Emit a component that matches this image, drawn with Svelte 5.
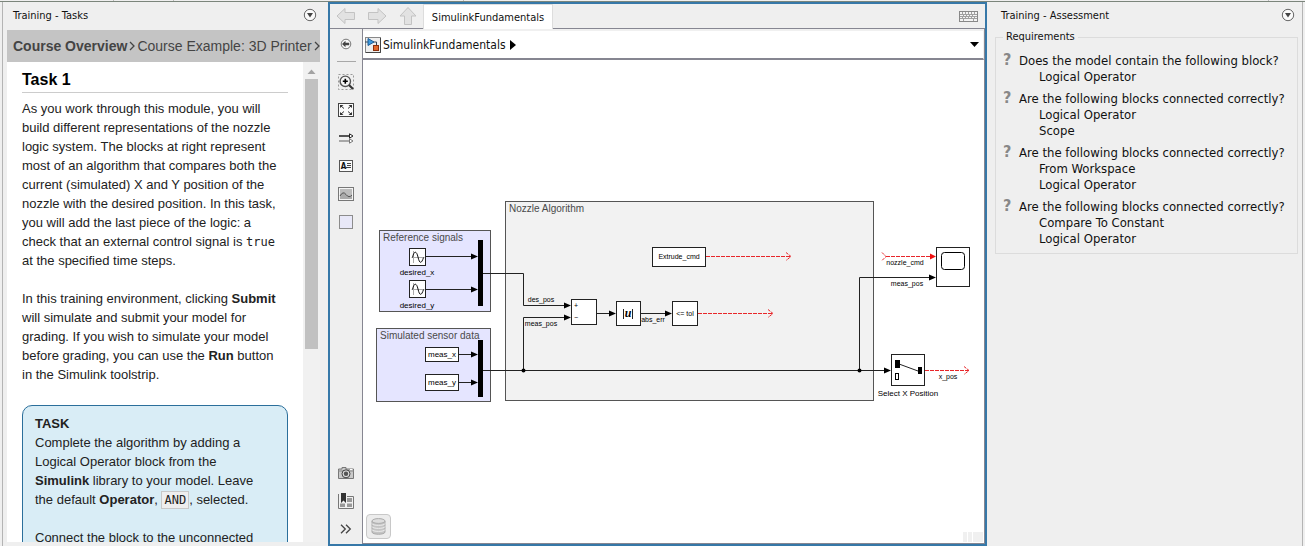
<script lang="ts">
	type Requirement = { question: string; blocks: string[] };

	const requirements: Requirement[] = [
		{ question: 'Does the model contain the following block?', blocks: ['Logical Operator'] },
		{
			question: 'Are the following blocks connected correctly?',
			blocks: ['Logical Operator', 'Scope']
		},
		{
			question: 'Are the following blocks connected correctly?',
			blocks: ['From Workspace', 'Logical Operator']
		},
		{
			question: 'Are the following blocks connected correctly?',
			blocks: ['Compare To Constant', 'Logical Operator']
		}
	];

	// model coordinates of the top left corner of the canvas
	const origin = { x: 363, y: 60 };

	const areas = [
		{ name: 'Nozzle Algorithm', x: 505, y: 201, w: 368, h: 199, fill: '#f2f2f2' },
		{ name: 'Reference signals', x: 379, y: 230, w: 111, h: 81, fill: '#e5e5ff' },
		{ name: 'Simulated sensor data', x: 376, y: 328, w: 114, h: 73, fill: '#e5e5ff' }
	];

	const blocks = [
		{ x: 409, y: 248, w: 16, h: 17 },
		{ x: 409, y: 280, w: 16, h: 17 },
		{ x: 425, y: 347, w: 33, h: 14 },
		{ x: 425, y: 374, w: 33, h: 16 },
		{ x: 571, y: 299, w: 25, h: 25 },
		{ x: 616, y: 301, w: 24, h: 24 },
		{ x: 672, y: 301, w: 25, h: 24 },
		{ x: 652, y: 247, w: 53, h: 19 },
		{ x: 936, y: 247, w: 33, h: 39 },
		{ x: 891, y: 354, w: 33, h: 31 }
	];

	const wires = [
		'M426 256.5H472',
		'M426 289.5H472',
		'M459 354.5H472',
		'M459 382.5H472',
		'M483 273.5H523.5V305.5H565',
		'M483 370.5H886',
		'M523.5 370.5V317.5H565',
		'M597 313.5H610',
		'M641 313.5H667',
		'M859.5 370.5V277.5H930'
	];

	const arrows = [
		[478, 256.5],
		[478, 289.5],
		[478, 354.5],
		[478, 382.5],
		[571, 305.5],
		[571, 317.5],
		[616, 313.5],
		[672, 313.5],
		[936, 277.5],
		[891, 370.5]
	];

	const openWires = [
		{ from: 706, to: 791, y: 256.5 },
		{ from: 698, to: 773, y: 313.5 },
		{ from: 925, to: 969, y: 370.5 }
	];

	const labels = [
		{ text: 'desired_x', x: 417, y: 275, size: 8 },
		{ text: 'desired_y', x: 417, y: 308, size: 8 },
		{ text: 'meas_x', x: 442, y: 357, size: 8 },
		{ text: 'meas_y', x: 442, y: 385, size: 8 },
		{ text: 'des_pos', x: 541, y: 302, size: 7 },
		{ text: 'meas_pos', x: 541, y: 326, size: 7 },
		{ text: 'abs_err', x: 653, y: 322, size: 7 },
		{ text: '<= tol', x: 685, y: 316, size: 7 },
		{ text: 'Extrude_cmd', x: 679, y: 259, size: 7 },
		{ text: 'nozzle_cmd', x: 905, y: 265, size: 7 },
		{ text: 'meas_pos', x: 907, y: 286, size: 7 },
		{ text: 'x_pos', x: 948, y: 379, size: 7 },
		{ text: 'Select X Position', x: 908, y: 396, size: 8 }
	];
</script>

{#snippet collapse()}
	<button class="collapse" aria-label="Panel actions">
		<svg width="14" height="14" viewBox="0 0 14 14">
			<circle cx="7" cy="7" r="5.7" fill="#fafafa" stroke="#666" />
			<path d="M4 5H10L7 9.5Z" fill="#444" />
		</svg>
	</button>
{/snippet}

<div class="app">
	<div class="ribbon">
		<i></i><i></i><i></i><i></i>
	</div>

	<section class="dock tasks">
		<header class="dock-title">
			<h1>Training - Tasks</h1>
			{@render collapse()}
		</header>
		<nav class="crumbs">
			<a class="current" href="#overview">Course Overview</a>
			<svg width="6" height="10" viewBox="0 0 6 10"><path d="M1 1L5 5L1 9" /></svg>
			<a href="#example">Course Example: 3D Printer</a>
			<svg width="6" height="10" viewBox="0 0 6 10"><path d="M1 1L5 5L1 9" /></svg>
		</nav>
		<div class="lesson">
			<article>
				<h2>Task 1</h2>
				<p>
					As you work through this module, you will build different representations of the nozzle
					logic system. The blocks at right represent most of an algorithm that compares both the
					current (simulated) X and Y position of the nozzle with the desired position. In this task,
					you will add the last piece of the logic: a check that an external control signal is
					<code>true</code> at the specified time steps.
				</p>
				<p>
					In this training environment, clicking <b>Submit</b> will simulate and submit your model for
					grading. If you wish to simulate your model before grading, you can use the <b>Run</b> button<br />
					in the Simulink toolstrip.
				</p>
				<div class="task-box">
					<b>TASK</b>
					<p>
						Complete the algorithm by adding a Logical Operator block from the<br />
						<b>Simulink</b> library to your model. Leave<br />
						the default <b>Operator</b>, <code class="value">AND</code>, selected.
					</p>
					<p>Connect the block to the unconnected</p>
				</div>
			</article>
			<div class="scrollbar">
				<svg width="9" height="5" viewBox="0 0 9 5"><path d="M0.5 5L4.5 0.5L8.5 5Z" fill="#a3a3a3" /></svg>
				<div class="thumb"></div>
			</div>
		</div>
	</section>

	<main class="editor">
		<div class="tabs">
			<button class="nav" aria-label="Back">
				<svg width="20" height="18" viewBox="0 0 20 18"><path d="M1 9L9 1.5V5.5H18.5V12.5H9V16.5Z" /></svg>
			</button>
			<button class="nav" aria-label="Forward">
				<svg width="20" height="18" viewBox="0 0 20 18"><path d="M19 9L11 1.5V5.5H1.5V12.5H11V16.5Z" /></svg>
			</button>
			<button class="nav up" aria-label="Up">
				<svg width="18" height="18" viewBox="0 0 18 18"><path d="M9 0.5L17 9H12.5V17.5H5.5V9H1Z" /></svg>
			</button>
			<button class="tab">SimulinkFundamentals</button>
			<button class="keyboard" aria-label="Keyboard shortcuts">
				<svg width="19" height="11" viewBox="0 0 19 11">
					<rect x="0.5" y="0.5" width="18" height="10" fill="#f4f4f4" stroke="#888" />
					<path
						d="M1 3.5H18M1 5.5H18M1 7.5H18M3.5 1V3M6.5 1V3M9.5 1V3M12.5 1V3M15.5 1V3M4.5 4V5M7.5 4V5M10.5 4V5M13.5 4V5M3.5 6V7M6.5 6V7M9.5 6V7M12.5 6V7M15.5 6V7M4.5 8V10M14.5 8V10"
						stroke="#a0a0a0"
					/>
				</svg>
			</button>
		</div>

		<div class="palette">
			<button aria-label="Hide browser">
				<svg width="12" height="12" viewBox="0 0 12 12">
					<circle cx="6" cy="6" r="4.8" fill="#f7f7f7" stroke="#777" />
					<path d="M2 6L5.5 2.8V4.8H9.2V7.2H5.5V9.2Z" fill="#444" />
				</svg>
			</button>
			<hr />
			<button aria-label="Zoom">
				<svg width="16" height="16" viewBox="0 0 16 16" fill="none">
					<rect x="0.5" y="0.5" width="15" height="15" stroke="#999" stroke-dasharray="2 2" />
					<circle cx="7.3" cy="7.3" r="5.2" fill="#f6f6f6" stroke="#555" stroke-width="1.4" />
					<path d="M11 11L15 15" stroke="#333" stroke-width="2.2" />
					<path d="M4.8 7.3H9.8M7.3 4.8V9.8" stroke="#000" stroke-width="1.6" />
				</svg>
			</button>
			<button aria-label="Fit to view">
				<svg width="16" height="14" viewBox="0 0 16 14">
					<rect x="0.5" y="0.5" width="15" height="13" fill="#fafafa" stroke="#444" />
					<path d="M2 2H5.5L2 5ZM14 2H10.5L14 5ZM2 12H5.5L2 9ZM14 12H10.5L14 9Z" fill="#333" />
					<path d="M3 3L6 5.5M13 3L10 5.5M3 11L6 8.5M13 11L10 8.5" stroke="#333" />
				</svg>
			</button>
			<button aria-label="Signal lines">
				<svg width="15" height="11" viewBox="0 0 15 11" fill="none">
					<path d="M0 3H11" stroke="#000" stroke-width="1.3" />
					<path d="M0 8H11" stroke="#777" stroke-width="1.2" />
					<path d="M10.5 0.8L14 3L10.5 5.2Z" fill="#fff" stroke="#222" />
					<path d="M10.5 5.8L14 8L10.5 10.2Z" fill="#fff" stroke="#777" />
				</svg>
			</button>
			<button class="annotation" aria-label="Annotation">
				<b>A</b>
				<svg width="5" height="6" viewBox="0 0 5 6"><path d="M1 0.5H5M1 2.5H5M0 4.5H5" stroke="#444" /></svg>
			</button>
			<button aria-label="Image">
				<svg width="16" height="14" viewBox="0 0 16 14">
					<rect x="0.5" y="0.5" width="15" height="13" fill="#f4f4f4" stroke="#777" />
					<rect x="2" y="2" width="12" height="10" fill="#bcbcbc" />
					<path d="M2 9Q5 3.5 8 7.5T14 8V12H2Z" fill="#aaa" />
					<path d="M2 9Q5 3.5 8 7.5T14 8" fill="none" stroke="#555" />
				</svg>
			</button>
			<button aria-label="Area">
				<svg width="14" height="14" viewBox="0 0 14 14">
					<rect x="0.5" y="0.5" width="13" height="13" fill="#e8e8f8" stroke="#8c8c8c" />
				</svg>
			</button>
			<button class="camera" aria-label="Screenshot">
				<svg width="16" height="12" viewBox="0 0 16 12">
					<path d="M1 2H4V0.5H8V2H15.5V11.5H0.5V2Z" fill="#c9c9c9" stroke="#777" />
					<path d="M0 4H16" stroke="#888" />
					<circle cx="8" cy="6.8" r="4" fill="#ddd" stroke="#444" />
					<circle cx="8" cy="6.8" r="2.2" fill="#555" />
					<path d="M12 2.5H14.5" stroke="#fff" />
				</svg>
			</button>
			<button aria-label="Bookmarks">
				<svg width="16" height="16" viewBox="0 0 16 16">
					<path d="M0.5 1V15.5H15.5V3.5H9" fill="#f1f1f1" stroke="#777" />
					<path d="M9 5H14V9H9ZM2 10.5H7V14H2ZM9 10.5H14V14H9Z" fill="#999" />
					<path d="M3 0H8V10L5.5 7.5L3 10Z" fill="#333" />
				</svg>
			</button>
			<button aria-label="More">
				<svg width="12" height="10" viewBox="0 0 12 10">
					<path d="M1 0.7L5.3 5L1 9.3M6 0.7L10.3 5L6 9.3" fill="none" stroke="#444" stroke-width="1.3" />
				</svg>
			</button>
		</div>

		<div class="workspace">
			<div class="address">
				<svg width="16" height="16" viewBox="0 0 16 16">
					<rect x="0.5" y="0.5" width="15" height="15" fill="#eee" stroke="#888" />
					<path d="M1 15.5H15.5V1" fill="none" stroke="#444" />
					<path d="M0 5H3M8 5H11.5V9" fill="none" stroke="#345" />
					<path d="M3 1.5L9 5L3 8.5Z" fill="#3d9be0" stroke="#1d5c96" />
					<rect x="8.5" y="8.5" width="5" height="5" fill="#e2682c" stroke="#8a2f0c" />
				</svg>
				<a href="#model">SimulinkFundamentals</a>
				<svg class="next" width="6" height="10" viewBox="0 0 6 10"><path d="M0 0L6 5L0 10Z" /></svg>
				<button class="history" aria-label="Address history">
					<svg width="9" height="5" viewBox="0 0 9 5"><path d="M0 0H9L4.5 5Z" /></svg>
				</button>
			</div>

			<div class="canvas">
				<svg class="model" width="100%" height="100%">
					<g transform="translate({-origin.x} {-origin.y})">
						{#each areas as area}
							<rect
								x={area.x + 0.5}
								y={area.y + 0.5}
								width={area.w}
								height={area.h}
								fill={area.fill}
								stroke="#555"
							/>
							<text class="area-name" x={area.x + 4} y={area.y + 11}>{area.name}</text>
						{/each}

						<g fill="none" stroke="#222">
							{#each wires as wire}
								<path d={wire} />
							{/each}
						</g>
						{#each arrows as [x, y]}
							<path d="M{x} {y}l-7 -3v6z" />
						{/each}
						<circle cx="523.5" cy="370.5" r="2" />
						<circle cx="859.5" cy="370.5" r="2" />

						<!-- unconnected signals -->
						<g fill="none" stroke="#e8262a">
							{#each openWires as wire}
								<path d="M{wire.from} {wire.y}H{wire.to}" stroke-dasharray="4 1" />
								<path d="M{wire.to - 5} {wire.y - 4}l5 4l-5 4" stroke-dasharray="3 1" />
							{/each}
							<path d="M886 256.5H930" stroke-dasharray="4 1" />
							<path d="M882 252.5l4 4l-4 4" stroke-dasharray="3 1" />
						</g>
						<path d="M936 256.5l-6 -3v6z" fill="#f01010" />

						<g fill="#fff" stroke="#222">
							{#each blocks as block}
								<rect x={block.x + 0.5} y={block.y + 0.5} width={block.w} height={block.h} />
							{/each}
						</g>
						<rect x="478" y="240" width="5" height="66" />
						<rect x="478" y="340" width="5" height="57" />

						<!-- sine waves -->
						{#each [248, 280] as y}
							<g transform="translate(409 {y})" fill="none">
								<path d="M2.5 9.5H15.5M4.5 3V15" stroke="#aaa" />
								<path d="M3.5 9.5C5 2.5 7.5 2.5 9 9C10.5 16 12.5 16 14.5 9.5" stroke="#111" />
							</g>
						{/each}

						<text class="sign" x="574" y="308">+</text>
						<text class="sign" x="574" y="320">−</text>
						<path d="M623.5 309V319M632.5 309V319" stroke="#222" />
						<text class="abs" x="628" y="317">u</text>

						<!-- scope screen -->
						<rect x="941.5" y="252.5" width="23" height="17" rx="3" fill="#fff" stroke="#000" />

						<!-- selector switch -->
						<path d="M899 364L918 371" stroke="#222" />
						<rect x="895" y="360" width="5" height="8" />
						<rect x="918" y="367" width="4" height="7" />
						<rect x="895.5" y="373.5" width="3" height="6" fill="#fff" stroke="#000" />

						{#each labels as label}
							<text class:small={label.size === 7} class="label" x={label.x} y={label.y}>{label.text}</text>
						{/each}
					</g>
				</svg>

				<button class="data" aria-label="Model data">
					<svg width="15" height="17" viewBox="0 0 15 17">
						<path d="M1 3V14C1 17 14 17 14 14V3" fill="#c4c4c4" stroke="#aaa" />
						<path
							d="M1 5.5C1 8 14 8 14 5.5M1 8.5C1 11 14 11 14 8.5M1 11.5C1 14 14 14 14 11.5"
							fill="none"
							stroke="#ededed"
						/>
						<ellipse cx="7.5" cy="3" rx="6.5" ry="2.4" fill="#ddd" stroke="#aaa" />
					</svg>
				</button>
				<div class="grip"><i></i><i></i><i></i></div>
			</div>
		</div>
	</main>

	<section class="dock assessment">
		<header class="dock-title">
			<h1>Training - Assessment</h1>
			{@render collapse()}
		</header>
		<fieldset>
			<legend>Requirements</legend>
			<ul>
				{#each requirements as requirement}
					<li>
						<span class="mark">?</span>
						<div>
							{requirement.question}
							{#each requirement.blocks as block}
								<div class="block-name">{block}</div>
							{/each}
						</div>
					</li>
				{/each}
			</ul>
		</fieldset>
	</section>
</div>

<style>
	:global(body) {
		margin: 0;
		background: #efefef;
	}

	* {
		box-sizing: border-box;
	}

	svg {
		display: block;
		flex: none;
	}

	button {
		display: flex;
		align-items: center;
		justify-content: center;
		padding: 0;
		border: 0;
		background: none;
		font: inherit;
		color: inherit;
	}

	a {
		color: inherit;
		text-decoration: none;
	}

	.app {
		display: grid;
		grid-template-columns: 328px minmax(0, 1fr) 318px;
		grid-template-rows: 2px minmax(0, 1fr);
		height: 100vh;
		overflow: hidden;
		font-family: Tahoma, 'DejaVu Sans Condensed', 'Noto Sans', sans-serif;
		font-size: 11px;
		color: #111;
	}

	.ribbon {
		grid-column: 1 / -1;
		display: flex;
		gap: 59px;
		padding: 0 36px 0 113px;
		border-bottom: 1px solid #7b857b;
	}

	.ribbon i {
		width: 1px;
		background: #bbb;
	}

	.ribbon i:nth-child(3) {
		margin-left: 230px;
	}

	.ribbon i:last-child {
		margin-left: auto;
	}

	.dock {
		display: flex;
		flex-direction: column;
		min-height: 0;
	}

	.dock-title {
		display: flex;
		align-items: center;
		justify-content: space-between;
		height: 26px;
	}

	.dock-title h1 {
		margin: 0;
		font-size: 11px;
		font-weight: normal;
	}

	.tasks {
		margin-left: 2px;
		padding: 0 8px 4px 4px;
		border-left: 1px solid #b4b4b4;
	}

	.tasks .dock-title {
		padding: 0 3px 0 6px;
	}

	.crumbs {
		display: flex;
		align-items: center;
		gap: 2px;
		height: 32px;
		margin-top: 2px;
		padding-left: 6px;
		background: #c4c4c4;
		color: #444;
		font-family: 'Liberation Sans', Arial, sans-serif;
		font-size: 14px;
		white-space: nowrap;
	}

	.crumbs .current {
		font-weight: bold;
	}

	.crumbs path {
		fill: none;
		stroke: #444;
		stroke-width: 1.3;
	}

	.lesson {
		display: flex;
		flex: 1;
		min-height: 0;
		overflow: hidden;
		font: 13px/19px 'Liberation Sans', Arial, sans-serif;
		color: #222;
	}

	article {
		flex: 1;
		min-width: 0;
		padding: 6px 15px 0;
		background: #fff;
		overflow: hidden;
	}

	h2 {
		margin: 0 0 6px;
		padding-bottom: 1px;
		border-bottom: 1px solid #ccc;
		font-size: 16px;
		line-height: 23px;
		color: #000;
	}

	p {
		margin: 0 0 19px;
	}

	code {
		font-family: 'DejaVu Sans Mono', monospace;
		font-size: 12px;
		line-height: 12px;
	}

	.value {
		padding: 1px 2px;
		border: 1px solid #c8c8c8;
		background: #eee;
	}

	.task-box {
		margin-top: 21px;
		padding: 8px 12px;
		border: 1px solid #2b6f9b;
		border-radius: 10px;
		background: #d9edf6;
	}

	.scrollbar {
		display: flex;
		flex-direction: column;
		align-items: center;
		gap: 5px;
		width: 17px;
		padding-top: 7px;
		background: #f1f1f1;
	}

	.thumb {
		width: 13px;
		height: 57%;
		background: #c1c1c1;
	}

	.editor {
		display: grid;
		grid-template-columns: 32px minmax(0, 1fr);
		grid-template-rows: 25px minmax(0, 1fr);
		border: 2px solid #3678a8;
	}

	.tabs {
		grid-column: 1 / -1;
		display: flex;
		align-items: center;
		padding-left: 6px;
		border-bottom: 1px solid #868691;
	}

	.nav {
		width: 31px;
		height: 24px;
		padding-right: 11px;
	}

	.nav.up {
		width: 25px;
		padding-right: 6px;
	}

	.nav path {
		fill: #e2e2e2;
		stroke: #c3c3c3;
	}

	.tab {
		align-self: stretch;
		width: 130px;
		margin-bottom: -1px;
		border: 1px solid #ddd;
		border-bottom: 0;
		background: #fff;
	}

	.keyboard {
		margin-left: auto;
		margin-right: 7px;
	}

	.palette {
		display: flex;
		flex-direction: column;
		align-items: center;
		gap: 4px;
		padding: 3px 0;
	}

	.palette button {
		flex: none;
		width: 24px;
		height: 24px;
	}

	.palette hr {
		width: 19px;
		height: 1px;
		margin: 1px 0 4px;
		border: 0;
		background: #a8a8a8;
	}

	.palette .annotation {
		width: 14px;
		height: 12px;
		margin: 6px 0;
		border: 1px solid #555;
		background: #fafafa;
		font-size: 8px;
	}

	.palette .camera {
		margin-top: auto;
	}

	.workspace {
		display: flex;
		flex-direction: column;
		min-width: 0;
		border: solid #868691;
		border-width: 0 1px 1px;
	}

	.address {
		display: flex;
		align-items: center;
		height: 31px;
		padding-left: 2px;
		border: 2px solid #f0f0f0;
		border-width: 2px 1px 0 0;
		border-bottom: 2px solid #868691;
		background: #fff;
		font-size: 12px;
	}

	.address a {
		margin: 0 4px 0 2px;
	}

	.history {
		margin-left: auto;
		padding: 4px;
	}

	.canvas {
		position: relative;
		flex: 1;
		min-height: 0;
		background: #fff;
		overflow: hidden;
	}

	.model {
		font-family: 'Liberation Sans', Arial, sans-serif;
	}

	.area-name {
		font-size: 10px;
		fill: #4a4a4a;
	}

	.label {
		font-size: 8px;
		text-anchor: middle;
	}

	.label.small {
		font-size: 7px;
	}

	.sign {
		font-size: 7px;
	}

	.abs {
		font: italic bold 12px 'Liberation Serif', serif;
		text-anchor: middle;
	}

	.data {
		position: absolute;
		left: 3px;
		bottom: 4px;
		width: 25px;
		height: 25px;
		border: 1px solid #c8c8c8;
		border-radius: 4px;
		background: #ececec;
	}

	.grip {
		position: absolute;
		right: 1px;
		bottom: 1px;
		display: flex;
		gap: 1px;
		height: 10px;
	}

	.grip i {
		width: 4px;
		background: #f0f0f0;
	}

	.grip i:last-child {
		width: 10px;
	}

	.assessment {
		margin-right: 2px;
		padding: 0 4px 0 8px;
		border-right: 1px solid #b4b4b4;
	}

	.assessment .dock-title {
		padding: 0 3px 0 6px;
	}

	fieldset {
		min-width: 0;
		margin: 2px 0 0;
		padding: 0 0 6px 7px;
		border: 1px solid #dcdcdc;
	}

	legend {
		padding: 0 3px;
		line-height: 14px;
	}

	ul {
		margin: 0;
		padding: 9px 0 0;
		list-style: none;
		font-size: 13px;
		line-height: 16px;
	}

	li {
		display: flex;
		margin-bottom: 6px;
		white-space: nowrap;
	}

	li:last-child {
		margin-bottom: 0;
	}

	.mark {
		width: 16px;
		font-size: 16px;
		font-weight: bold;
		line-height: 14px;
		color: #888;
	}

	.block-name {
		padding-left: 20px;
	}
</style>
